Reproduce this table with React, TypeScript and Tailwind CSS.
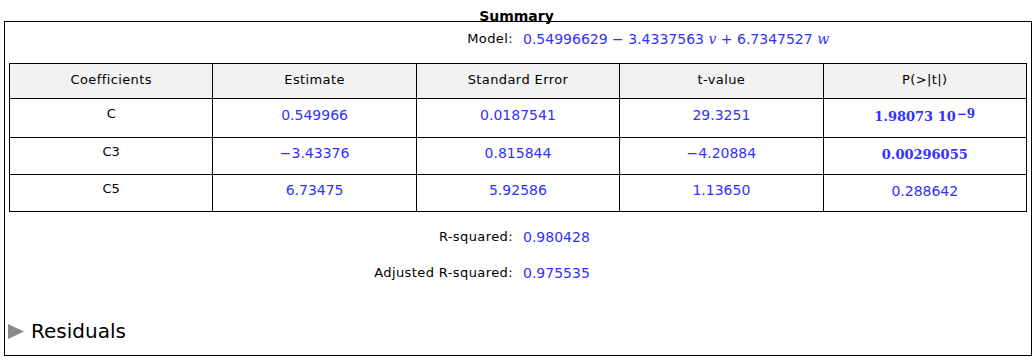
import React from "react";

const sans = "font-['DejaVu_Sans','Verdana',sans-serif]";
const boldSerif = "font-['DejaVu_Serif','Liberation_Serif',serif] font-bold text-[13px]";

type Row = {
  name: string;
  estimate: string;
  stdErr: string;
  tValue: string;
  p: React.ReactNode;
};

const rows: Row[] = [
  {
    name: "C",
    estimate: "0.549966",
    stdErr: "0.0187541",
    tValue: "29.3251",
    p: (
      <span className={boldSerif}>
        1.98073 10
        <sup className="relative -top-[3px] text-[12px] ml-[1px]">−9</sup>
      </span>
    ),
  },
  {
    name: "C3",
    estimate: "−3.43376",
    stdErr: "0.815844",
    tValue: "−4.20884",
    p: <span className={boldSerif}>0.00296055</span>,
  },
  {
    name: "C5",
    estimate: "6.73475",
    stdErr: "5.92586",
    tValue: "1.13650",
    p: "0.288642",
  },
];

const headers = ["Coefficients", "Estimate", "Standard Error", "t-value", "P(>|t|)"];

// label / value pair used for Model, R-squared lines
const Pair = ({ label, children, className }: { label: string; children: React.ReactNode; className?: string }) => (
  <div className={`flex items-center ${className ?? ""}`}>
    <div className="w-[508px] text-right tracking-[0.4px]">{label}</div>
    <div className="ml-[10px] text-[#3232ff] text-[14px]">{children}</div>
  </div>
);

export default function App() {
  return (
    <div className={`w-[1035px] h-[360px] bg-white text-black ${sans} text-[13px] overflow-hidden`}>
      <div className="h-[21px] flex items-end justify-center">
        <span className="font-bold text-[14px] leading-[15px] translate-y-[3px] -translate-x-[1px]">Summary</span>
      </div>

      <div className="ml-[4px] w-[1028px] h-[335px] border border-black flex flex-col">
        <Pair label="Model:" className="h-[41px] pb-[7px]">
          0.54996629 − 3.4337563{" "}
          <span className="font-['DejaVu_Serif',serif] italic text-[14px]">v</span> + 6.7347527{" "}
          <span className="font-['DejaVu_Serif',serif] italic text-[14px]">w</span>
        </Pair>

        <div className="px-[4px]">
          <table className="w-full table-fixed border-collapse border border-black">
            <thead>
              <tr className="h-[35px] bg-[#f2f2f2]">
                {headers.map((h) => (
                  <th key={h} className="border border-black font-normal text-center pb-[3px] tracking-[0.4px]">
                    {h}
                  </th>
                ))}
              </tr>
            </thead>
            <tbody>
              {rows.map((r, i) => (
                <tr key={r.name} className={i === 0 ? "h-[39px]" : "h-[37px]"}>
                  <td className="border border-black text-center pb-[8px]">{r.name}</td>
                  <td className="border border-black text-center text-[#3232ff] text-[14px] pb-[6px]">{r.estimate}</td>
                  <td className="border border-black text-center text-[#3232ff] text-[14px] pb-[6px]">{r.stdErr}</td>
                  <td className="border border-black text-center text-[#3232ff] text-[14px] pb-[6px]">{r.tValue}</td>
                  <td className="border border-black text-center text-[#3232ff] text-[14px] pb-[4px]">{r.p}</td>
                </tr>
              ))}
            </tbody>
          </table>
        </div>

        <Pair label="R-squared:" className="mt-[15px] h-[20px]">
          0.980428
        </Pair>
        <Pair label="Adjusted R-squared:" className="mt-[16px] h-[20px]">
          0.975535
        </Pair>

        <div className="mt-[36px] flex items-center pl-[3px] gap-[7px]">
          <svg width="16" height="15" viewBox="0 0 16 15">
            <polygon points="0,0 16,7.5 0,15" fill="#8a8a8a" />
          </svg>
          <span className="text-[20px] leading-[24px]">Residuals</span>
        </div>
      </div>
    </div>
  );
}
